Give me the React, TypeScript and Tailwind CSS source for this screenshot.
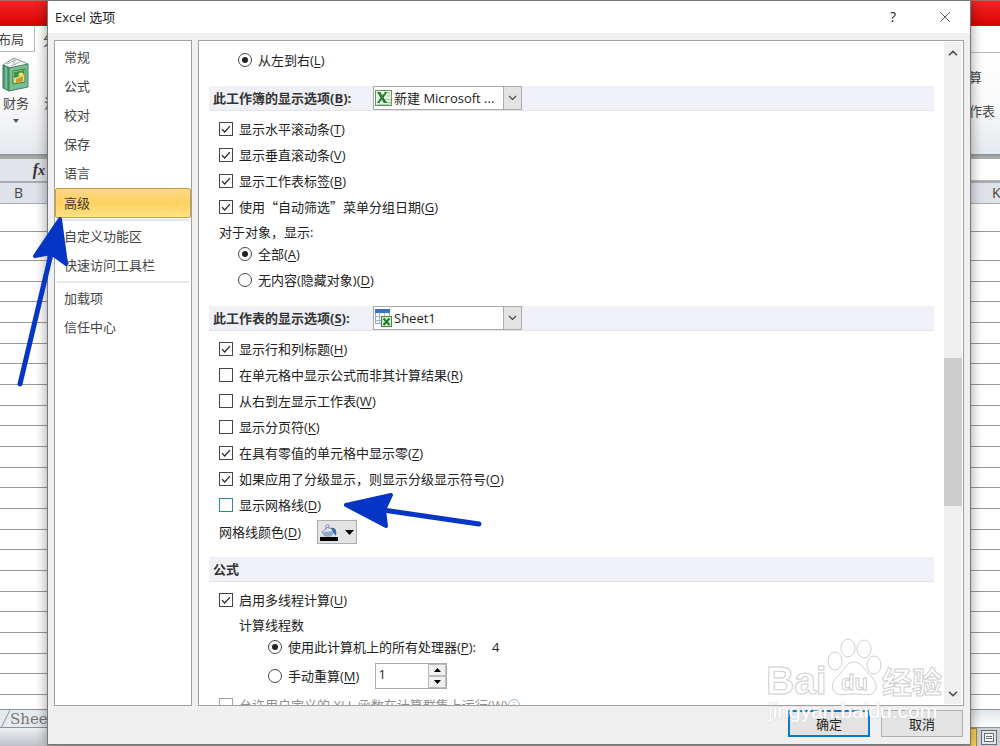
import { ReactNode } from "react";
import { ChevronDown, ChevronUp, X } from "lucide-react";

const navGroups = [
  ["常规", "公式", "校对", "保存", "语言", "高级"],
  ["自定义功能区", "快速访问工具栏"],
  ["加载项", "信任中心"],
];

const gridRows = Array.from({ length: 21 }, (_, i) => i);

function HotKey({ k, suffix = "" }: { k: string; suffix?: string }) {
  return (
    <>
      (<span className="underline underline-offset-2">{k}</span>){suffix}
    </>
  );
}

interface OptionProps {
  label: ReactNode;
  hotKey: string;
  checked?: boolean;
}

function CheckRow({ label, hotKey, checked, focused }: OptionProps & { focused?: boolean }) {
  return (
    <label className="flex h-[26px] shrink-0 items-center gap-1.5 pl-5">
      <span className="relative flex h-3.5 w-3.5">
        <input
          type="checkbox"
          defaultChecked={checked}
          className={
            focused
              ? "peer h-3.5 w-3.5 appearance-none border border-[#2a87ad] bg-white"
              : "peer h-3.5 w-3.5 appearance-none border border-[#444] bg-white"
          }
        />
        <svg
          viewBox="0 0 14 14"
          className="pointer-events-none absolute inset-0 hidden h-3.5 w-3.5 peer-checked:block"
        >
          <path d="M3 7.2 5.6 10 11 4.2" fill="none" stroke="#222" strokeWidth="1.2" />
        </svg>
      </span>
      <span>
        {label}
        <HotKey k={hotKey} />
      </span>
    </label>
  );
}

function Radio({
  label,
  hotKey,
  checked,
  name,
  suffix,
}: OptionProps & { name: string; suffix?: string }) {
  return (
    <label className="flex h-[26px] shrink-0 items-center gap-1.5">
      <span className="relative flex h-3.5 w-3.5">
        <input
          type="radio"
          name={name}
          defaultChecked={checked}
          className="peer h-3.5 w-3.5 appearance-none rounded-full border border-[#444] bg-white"
        />
        <span className="pointer-events-none absolute inset-1 hidden rounded-full bg-[#222] peer-checked:block" />
      </span>
      <span>
        {label}
        <HotKey k={hotKey} suffix={suffix} />
      </span>
    </label>
  );
}

function SectionHeader({ children }: { children: ReactNode }) {
  return (
    <div className="mt-[13px] mb-[5px] ml-2.5 flex h-[25px] shrink-0 items-center border-b border-[#e2e4e9] bg-[#eff1f6] pl-1 font-bold text-[#333]">
      {children}
    </div>
  );
}

function HeaderSelect({ id, value, icon }: { id: string; value: string; icon: ReactNode }) {
  return (
    <div className="relative h-6 w-[149px] font-normal text-[#222]">
      <select
        id={id}
        className="h-6 w-full appearance-none border border-[#aaa] bg-white pr-5 pl-5 text-[13px]"
      >
        <option>{value}</option>
      </select>
      <span className="pointer-events-none absolute top-[3px] left-0.5">{icon}</span>
      <span className="pointer-events-none absolute top-0 right-0 flex h-6 w-[19px] items-center justify-center border border-[#aaa] bg-[#e3e3e3]">
        <svg width="9" height="6" viewBox="0 0 9 6">
          <path d="m1 1 3.5 3.5L8 1" fill="none" stroke="#444" strokeWidth="1.2" />
        </svg>
      </span>
    </div>
  );
}

function WorkbookIcon() {
  return (
    <svg width="17" height="18" viewBox="0 0 17 18">
      <rect x="0.5" y="1.5" width="16" height="15" fill="#e9f4e7" stroke="#5b9a5e" />
      <path d="M2 15h13v1H2z" fill="#a8cfa5" />
      <path d="M11 10c2 0 3 1 5 1M10 13c2 0 4 1 6 1" stroke="#8abf8b" fill="none" />
      <path d="M2 3h3.4l2 3.4L10 3h2.4L8.6 8.4 12.3 14H8.8L6.8 10.6 4.4 14H2l3.5-5.3z" fill="#297c31" />
      <path d="M12 3h3v2h-3zM12 6h3v2h-3z" fill="#b9ddb6" />
    </svg>
  );
}

function SheetIcon() {
  return (
    <svg width="17" height="18" viewBox="0 0 17 18">
      <rect x="0.5" y="0.5" width="14" height="14" fill="#fff" stroke="#8ba9d4" />
      <rect x="0" y="0" width="15" height="4" fill="#3970cf" />
      <path d="M0 7.5h15M0 11.5h15M4.5 4v11M9.5 4v11" stroke="#9fb8dc" />
      <rect x="6.5" y="7.5" width="10" height="10" fill="#d5ecd0" stroke="#438a49" />
      <path d="m8.5 9.5 6 6.5M14.5 9.5l-6 6.5" stroke="#227a2b" strokeWidth="2" />
    </svg>
  );
}

function BucketIcon() {
  return (
    <svg width="20" height="18" viewBox="0 0 20 18">
      <path d="m3 9 6-5 7 4-4 5H6z" fill="#e6edf7" stroke="#7f93b8" />
      <path d="m4 9 9-1 2 1-3 4H6z" fill="#8ea9d2" />
      <path d="M7 7V3c0-2 3-2 3 0v3" fill="none" stroke="#8592ab" />
      <path d="M12 5c4-1 6 2 5 8l-3-4z" fill="#3e65ad" />
      <rect x="1" y="14" width="18" height="4" fill="#000" />
    </svg>
  );
}

function BookIcon() {
  return (
    <svg width="28" height="36" viewBox="0 0 28 36">
      <path d="m1 8 11-7 14 6-14 5z" fill="#f4f6f5" stroke="#7f9b91" />
      <path d="m5 7 9-4M9 9l9-4M12 1v7" stroke="#a8b7b5" fill="none" />
      <path d="m1 8 6 3v23l-6-3z" fill="#4d9d76" stroke="#39785a" />
      <path d="m7 11 19-4v23L7 34z" fill="#79bd91" stroke="#418461" />
      <path d="M4 10v22" stroke="#a5d5b8" />
      <path d="m11 14 12-2v13l-12 2z" fill="#d4e49a" stroke="#3f7d49" />
      <path d="m12 15 10-2v5l-10 3z" fill="#3c9547" />
      <circle cx="19" cy="18" r="2.5" fill="#f4dc69" />
      <path d="m14 22 7-3v5l-7 2z" fill="#d29a24" />
    </svg>
  );
}

function GridLines() {
  return (
    <div className="flex flex-1 flex-col bg-white">
      <div className="h-7 border-b border-[#999]" />
      <div className="h-[29px] border-b border-[#999]" />
      {gridRows.map((row) => (
        <div key={row} className="flex-1 border-b border-[#999]" />
      ))}
      <div className="h-3.5" />
    </div>
  );
}

function SheetLeft() {
  return (
    <div className="flex w-[47px] shrink-0 flex-col overflow-hidden whitespace-nowrap text-[#444]">
      <div className="h-[26px] shrink-0 border-t border-[#b66] bg-linear-to-b from-[#f52222] to-[#d80000]" />
      <div className="flex h-[26px] shrink-0 bg-white">
        <div className="flex w-[35px] shrink-0 items-center justify-end border-r border-b border-[#bbb] pr-2.5">
          布局
        </div>
        <span className="pt-1 pl-2">分</span>
      </div>
      <div className="flex h-[104px] shrink-0 border-b-2 border-[#9299a2] bg-linear-to-b from-white via-[#fafafb] to-[#e5e8ed]">
        <div className="flex w-8 shrink-0 flex-col items-center pt-[5px]">
          <BookIcon />
          <span className="leading-5">财务</span>
          <svg width="6" height="4" viewBox="0 0 6 4" className="mt-1.5">
            <path d="M0 0h6L3 4z" fill="#555" />
          </svg>
        </div>
        <span className="pt-[41px] pl-3">注</span>
      </div>
      <div className="mt-[3px] flex h-[22px] shrink-0 items-center justify-end bg-[#e0e3e8] pr-0.5 font-['Liberation_Serif',serif] text-base font-bold text-[#333] italic">
        f<span className="pt-0.5 text-sm">x</span>
      </div>
      <div className="mt-px flex h-[22px] shrink-0 items-center border-t border-b border-[#a9aeb6] bg-[#dfe2e8] pl-3.5 text-sm">
        B
      </div>
      <GridLines />
      <div className="flex h-[19px] shrink-0 items-center border-t border-b border-[#8b9299] bg-[#e6eaee] font-['DejaVu_Serif',serif] text-[15px] text-[#777]">
        <svg width="10" height="18" viewBox="0 0 10 18" className="shrink-0">
          <path d="M1 18 10 0" stroke="#899199" />
        </svg>
        Sheet1
      </div>
      <div className="h-[18px] shrink-0 bg-linear-to-b from-[#eff1f3] to-[#bec2c8]" />
    </div>
  );
}

function SheetRight() {
  return (
    <div className="flex w-[29px] shrink-0 flex-col overflow-hidden whitespace-nowrap text-[#444]">
      <div className="h-[26px] shrink-0 border-t border-[#b66] bg-linear-to-b from-[#f52222] to-[#d80000]" />
      <div className="h-[26px] shrink-0 bg-white" />
      <div className="flex h-[104px] shrink-0 flex-col border-t border-b-2 border-t-[#bbb] border-b-[#9299a2] bg-linear-to-b from-white via-[#fafafb] to-[#e5e8ed] pt-3.5">
        <div className="flex h-[34px] w-[11px] justify-end">算</div>
        <div className="flex w-6 justify-end">作表</div>
      </div>
      <div className="mt-[3px] h-[22px] shrink-0 border-b border-[#b3b7bd] bg-white" />
      <div className="mt-px flex h-[22px] shrink-0 items-center border-t border-b border-[#a9aeb6] bg-[#dfe2e8] pl-[21px] text-sm">
        K
      </div>
      <GridLines />
      <div className="h-[19px] shrink-0 border-t border-b border-[#8b9299] bg-linear-to-b from-[#e3e6ea] to-white" />
      <div className="flex h-[18px] shrink-0 gap-1 bg-[#cdd1d7]">
        <div className="w-1.5 border-t border-r border-[#ae8a35] bg-[#ffd04a]" />
        <svg width="18" height="18" viewBox="0 0 18 18">
          <rect x="0.5" y="2.5" width="15" height="14" fill="#e2e5ea" stroke="#646c78" />
          <rect x="3.5" y="5.5" width="9" height="8" fill="#fff" stroke="#646c78" />
          <path d="M5 8.5h6M5 10.5h6" stroke="#646c78" />
        </svg>
      </div>
    </div>
  );
}

function Navigation() {
  return (
    <nav className="flex w-[138px] shrink-0 flex-col border border-[#a0a0a0] bg-white pt-0.5 text-[#444]">
      {navGroups.map((group, i) => (
        <div key={group[0]} className="flex flex-col">
          {i > 0 && <hr className="mx-0.5 my-px h-0.5 border-0 bg-[#e3e6ea]" />}
          {group.map((item) => (
            <button
              key={item}
              className={
                item === "高级"
                  ? "h-[30px] rounded-xs border border-[#c7a04a] bg-linear-to-b from-[#fbd887] via-[#ffd261] to-[#ffe182] pl-2 text-left text-[#443c28]"
                  : "h-[29px] pb-0.5 pl-[9px] text-left"
              }
            >
              {item}
            </button>
          ))}
        </div>
      ))}
    </nav>
  );
}

function Options() {
  return (
    <div className="flex min-w-0 flex-1 flex-col overflow-hidden pt-1.5 pr-2.5">
      <div className="pl-[39px]">
        <Radio name="direction" label="从左到右" hotKey="L" checked />
      </div>

      <SectionHeader>
        <label htmlFor="workbook" className="w-40">
          此工作簿的显示选项
          <HotKey k="B" suffix=":" />
        </label>
        <HeaderSelect id="workbook" value="新建 Microsoft ..." icon={<WorkbookIcon />} />
      </SectionHeader>
      <CheckRow label="显示水平滚动条" hotKey="T" checked />
      <CheckRow label="显示垂直滚动条" hotKey="V" checked />
      <CheckRow label="显示工作表标签" hotKey="B" checked />
      <CheckRow
        label={
          <span className="font-['Noto_Sans_CJK_SC',sans-serif]">使用“自动筛选”菜单分组日期</span>
        }
        hotKey="G"
        checked
      />
      <p className="h-[21px] shrink-0 pl-5 leading-6">对于对象，显示:</p>
      <div className="pl-[39px]">
        <Radio name="objects" label="全部" hotKey="A" checked />
        <Radio name="objects" label="无内容(隐藏对象)" hotKey="D" />
      </div>

      <SectionHeader>
        <label htmlFor="worksheet" className="w-40">
          此工作表的显示选项
          <HotKey k="S" suffix=":" />
        </label>
        <HeaderSelect id="worksheet" value="Sheet1" icon={<SheetIcon />} />
      </SectionHeader>
      <CheckRow label="显示行和列标题" hotKey="H" checked />
      <CheckRow label="在单元格中显示公式而非其计算结果" hotKey="R" />
      <CheckRow label="从右到左显示工作表" hotKey="W" />
      <CheckRow label="显示分页符" hotKey="K" />
      <CheckRow label="在具有零值的单元格中显示零" hotKey="Z" checked />
      <CheckRow label="如果应用了分级显示，则显示分级显示符号" hotKey="O" checked />
      <CheckRow label="显示网格线" hotKey="D" focused />
      <div className="flex h-[26px] shrink-0 items-end pl-5">
        <label htmlFor="gridColor" className="w-[98px] leading-6">
          网格线颜色
          <HotKey k="D" />
        </label>
        <button
          id="gridColor"
          className="flex h-6 w-10 items-center gap-1.5 border border-[#adadad] bg-[#e3e3e3] pl-px"
        >
          <BucketIcon />
          <svg width="9" height="5" viewBox="0 0 9 5">
            <path d="M0 0h9L4.5 5z" fill="#000" />
          </svg>
        </button>
      </div>

      <SectionHeader>公式</SectionHeader>
      <CheckRow label="启用多线程计算" hotKey="U" checked />
      <p className="h-[21px] shrink-0 pl-10 leading-6">计算线程数</p>
      <div className="flex shrink-0 items-center gap-4 pl-[69px]">
        <Radio name="threads" label="使用此计算机上的所有处理器" hotKey="P" suffix=":" checked />
        <span>4</span>
      </div>
      <div className="flex h-8 shrink-0 items-center gap-4 pl-[69px]">
        <Radio name="threads" label="手动重算" hotKey="M" />
        <div className="flex h-[26px] w-[72px] border border-[#aaa] bg-white">
          <input
            aria-label="线程数"
            defaultValue="1"
            className="min-w-0 flex-1 px-0.5 pb-1 outline-none"
          />
          <div className="flex w-[18px] flex-col">
            <button
              aria-label="增加"
              className="flex flex-1 items-center justify-center border border-[#bbb] bg-[#f0f0f0]"
            >
              <svg width="7" height="4" viewBox="0 0 7 4">
                <path d="M0 4h7L3.5 0z" />
              </svg>
            </button>
            <button
              aria-label="减少"
              className="flex flex-1 items-center justify-center border border-[#bbb] bg-[#f0f0f0]"
            >
              <svg width="7" height="4" viewBox="0 0 7 4">
                <path d="M0 0h7L3.5 4z" />
              </svg>
            </button>
          </div>
        </div>
      </div>
      <div className="flex shrink-0 items-center opacity-50">
        <CheckRow label="允许用户定义的 XLL 函数在计算群集上运行" hotKey="W" />
        <svg width="12" height="12" viewBox="0 0 12 12">
          <circle cx="6" cy="6" r="5.5" fill="none" stroke="#4a74b5" />
          <path d="M6 3v1M6 5v4" stroke="#4a74b5" />
        </svg>
      </div>
    </div>
  );
}

function ScrollBar() {
  return (
    <div className="my-px mr-px flex w-[18px] shrink-0 flex-col items-center bg-[#f0f0f0]">
      <button aria-label="向上滚动" className="flex h-[21px] items-center">
        <ChevronUp size={14} strokeWidth={3} color="#505050" />
      </button>
      <div className="flex-295" />
      <div className="w-full flex-148 bg-[#cdcdcd]" />
      <div className="flex-177" />
      <button aria-label="向下滚动" className="flex h-[21px] items-center">
        <ChevronDown size={14} strokeWidth={3} color="#505050" />
      </button>
    </div>
  );
}

function Arrows() {
  return (
    <svg
      width="500"
      height="540"
      viewBox="0 0 500 540"
      className="pointer-events-none absolute top-0 left-0"
      stroke="#0535c4"
      fill="#0535c4"
      strokeLinejoin="round"
      strokeLinecap="round"
    >
      <path d="M60 219 35 256 51 253 66 264Z" strokeWidth="4" />
      <path d="M51 254 20 384" strokeWidth="5" />
      <path d="M346 505 391 495 384 510 386 526Z" strokeWidth="4" />
      <path d="M383 510 479 524" strokeWidth="5" />
    </svg>
  );
}

function Watermark() {
  return (
    <svg
      width="180"
      height="90"
      viewBox="0 0 180 90"
      className="pointer-events-none absolute right-[52px] bottom-5 font-['Liberation_Sans','Noto_Sans_CJK_SC',sans-serif]"
      fill="#fff"
      fillOpacity="0.75"
      stroke="#cfcfcf"
      strokeWidth="1"
    >
      <text x="-2" y="58" fontSize="39" fontWeight="bold">
        Bai
      </text>
      <ellipse cx="67" cy="25" rx="7" ry="9" />
      <ellipse cx="80" cy="12" rx="7" ry="9" />
      <ellipse cx="96" cy="13" rx="7" ry="9" />
      <ellipse cx="106" cy="29" rx="7" ry="9" />
      <path d="M86 26c-8 0-10 9-16 14s-7 10-4 15c4 6 11 3 20 3s17 3 21-3c3-6 0-11-5-16-5-4-8-13-16-13z" />
      <text x="73" y="54" fontSize="22" fontWeight="bold">
        du
      </text>
      <text x="114" y="57" fontSize="30" fontWeight="bold">
        经验
      </text>
      <text x="0" y="82" fontSize="21" stroke="#d8d8d8" fillOpacity="1" paintOrder="stroke">
        jingyan.baidu.com
      </text>
    </svg>
  );
}

export default function App() {
  return (
    <div className="relative flex h-screen min-h-[600px] overflow-hidden bg-[#aaa] font-['Open_Sans','Noto_Sans_CJK_SC',sans-serif] text-[13px] leading-5 text-[#222]">
      <SheetLeft />
      <section
        role="dialog"
        aria-labelledby="title"
        className="z-10 mb-px flex min-w-0 flex-1 flex-col border border-[#777] bg-[#f0f0f0] shadow-[0_0_12px_rgba(0,0,0,0.4)]"
      >
        <header className="flex h-8 shrink-0 items-center bg-white pr-4 pl-[7px]">
          <h1 id="title" className="flex-1">
            Excel 选项
          </h1>
          <button aria-label="帮助" className="mr-10 text-sm">
            ?
          </button>
          <button aria-label="关闭">
            <X size={18} strokeWidth={1} />
          </button>
        </header>
        <div className="flex min-h-0 flex-1 gap-1.5 px-1.5 pt-[7px]">
          <Navigation />
          <main className="flex min-w-0 flex-1 border border-[#a0a0a0] bg-white">
            <Options />
            <ScrollBar />
          </main>
        </div>
        <footer className="flex h-[38px] shrink-0 items-start justify-end gap-[11px] pt-1 pr-[7px]">
          <button className="h-[27px] w-[82px] border-2 border-[#0878c8] bg-[#e3e3e3]">确定</button>
          <button className="h-[27px] w-[82px] border border-[#adadad] bg-[#e3e3e3]">取消</button>
        </footer>
      </section>
      <SheetRight />
      <div className="pointer-events-none absolute inset-0 z-20">
        <Arrows />
        <Watermark />
      </div>
    </div>
  );
}
